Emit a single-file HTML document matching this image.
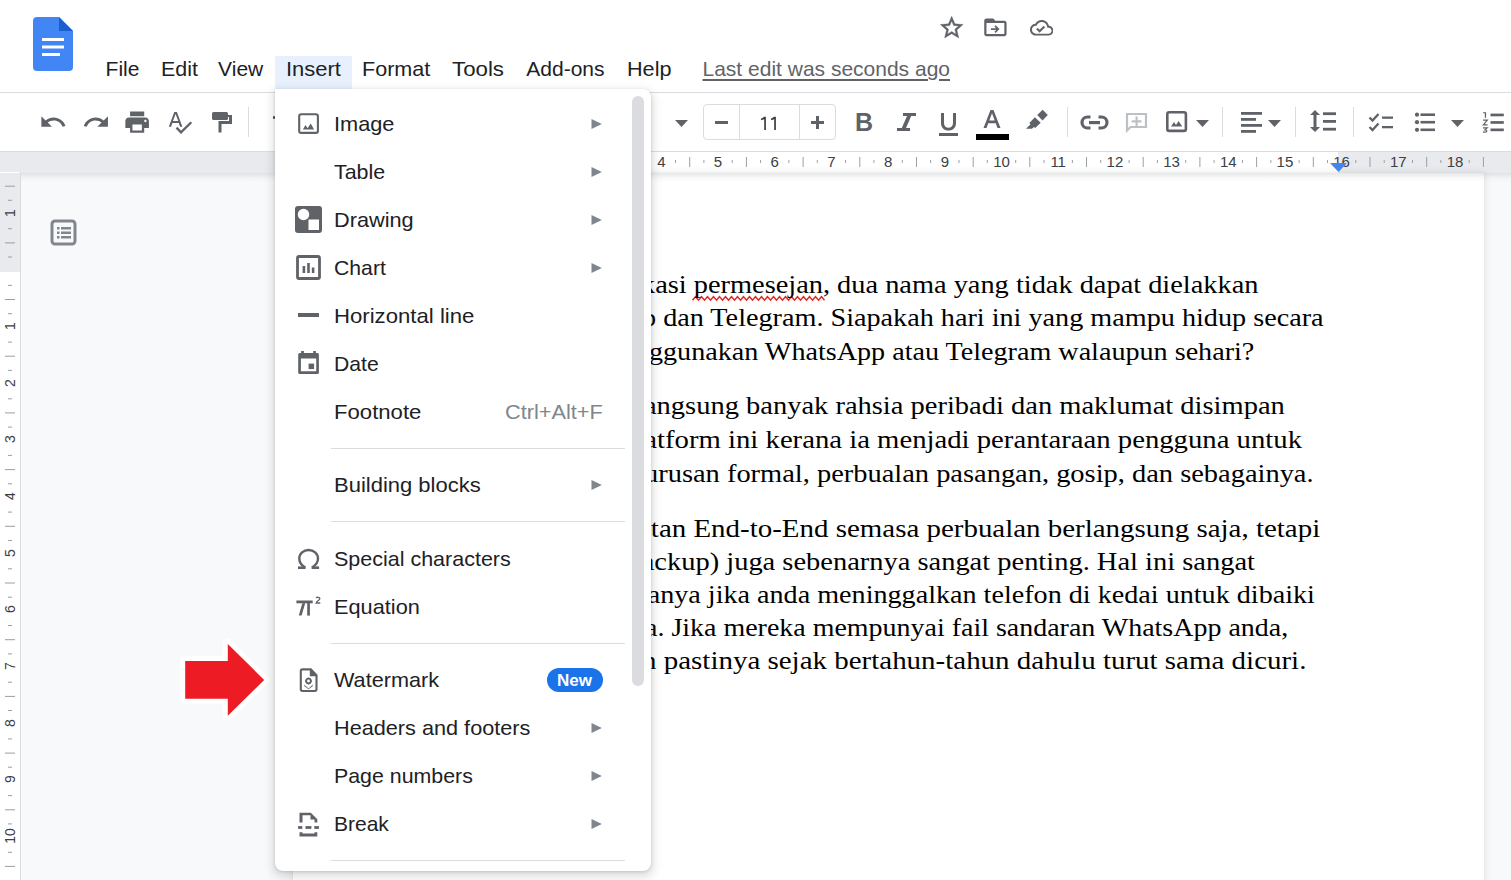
<!DOCTYPE html>
<html><head><meta charset="utf-8">
<style>
*{box-sizing:border-box;margin:0;padding:0}
html,body{width:1511px;height:880px;overflow:hidden;background:#f8f9fa;font-family:"Liberation Sans",sans-serif;color:#202124;position:relative}
</style></head><body>
<div style="position:absolute;left:0;top:0;width:1511px;height:92px;background:#fff"></div>
<div style="position:absolute;left:0;top:92px;width:1511px;height:1px;background:#dadce0"></div>
<div style="position:absolute;left:0;top:93px;width:1511px;height:58px;background:#fff"></div>
<div style="position:absolute;left:0;top:151px;width:1511px;height:1px;background:#dadce0"></div>
<div style="position:absolute;left:0;top:152px;width:1511px;height:21px;background:#e8eaed"></div>
<div style="position:absolute;left:436px;top:152px;width:902px;height:21px;background:#fff"></div>
<div style="position:absolute;left:0;top:173px;width:1511px;height:707px;background:#f8f9fa"></div>
<div style="position:absolute;left:293px;top:173px;width:1191px;height:707px;background:#fff;box-shadow:0 0 1px rgba(60,64,67,.12),0 1px 7px 1px rgba(60,64,67,.12)"></div>
<div style="position:absolute;left:20px;top:173px;width:1491px;height:9px;background:linear-gradient(rgba(60,64,67,.13),rgba(60,64,67,.04) 50%,rgba(60,64,67,0))"></div>
<div style="position:absolute;left:0;top:172px;width:20px;height:708px;background:#fff"></div>
<div style="position:absolute;left:0;top:173px;width:20px;height:99px;background:#e8eaed"></div>
<div style="position:absolute;left:20px;top:172px;width:1px;height:708px;background:#dadce0"></div>
<svg style="position:absolute;left:0;top:152px" width="1511" height="20"><rect x="278.2" y="8" width="1" height="3" fill="#9aa0a6"/><rect x="292.4" y="5" width="1" height="10" fill="#9aa0a6"/><rect x="306.5" y="8" width="1" height="3" fill="#9aa0a6"/><rect x="334.9" y="8" width="1" height="3" fill="#9aa0a6"/><rect x="349.1" y="5" width="1" height="10" fill="#9aa0a6"/><rect x="363.2" y="8" width="1" height="3" fill="#9aa0a6"/><rect x="391.6" y="8" width="1" height="3" fill="#9aa0a6"/><rect x="405.8" y="5" width="1" height="10" fill="#9aa0a6"/><rect x="419.9" y="8" width="1" height="3" fill="#9aa0a6"/><rect x="448.3" y="8" width="1" height="3" fill="#9aa0a6"/><rect x="462.4" y="5" width="1" height="10" fill="#9aa0a6"/><rect x="476.6" y="8" width="1" height="3" fill="#9aa0a6"/><rect x="505.0" y="8" width="1" height="3" fill="#9aa0a6"/><rect x="519.1" y="5" width="1" height="10" fill="#9aa0a6"/><rect x="533.3" y="8" width="1" height="3" fill="#9aa0a6"/><rect x="561.7" y="8" width="1" height="3" fill="#9aa0a6"/><rect x="575.8" y="5" width="1" height="10" fill="#9aa0a6"/><rect x="590.0" y="8" width="1" height="3" fill="#9aa0a6"/><rect x="618.3" y="8" width="1" height="3" fill="#9aa0a6"/><rect x="632.5" y="5" width="1" height="10" fill="#9aa0a6"/><rect x="646.7" y="8" width="1" height="3" fill="#9aa0a6"/><rect x="675.0" y="8" width="1" height="3" fill="#9aa0a6"/><rect x="689.2" y="5" width="1" height="10" fill="#9aa0a6"/><rect x="703.4" y="8" width="1" height="3" fill="#9aa0a6"/><rect x="731.7" y="8" width="1" height="3" fill="#9aa0a6"/><rect x="745.9" y="5" width="1" height="10" fill="#9aa0a6"/><rect x="760.1" y="8" width="1" height="3" fill="#9aa0a6"/><rect x="788.4" y="8" width="1" height="3" fill="#9aa0a6"/><rect x="802.6" y="5" width="1" height="10" fill="#9aa0a6"/><rect x="816.8" y="8" width="1" height="3" fill="#9aa0a6"/><rect x="845.1" y="8" width="1" height="3" fill="#9aa0a6"/><rect x="859.3" y="5" width="1" height="10" fill="#9aa0a6"/><rect x="873.4" y="8" width="1" height="3" fill="#9aa0a6"/><rect x="901.8" y="8" width="1" height="3" fill="#9aa0a6"/><rect x="916.0" y="5" width="1" height="10" fill="#9aa0a6"/><rect x="930.1" y="8" width="1" height="3" fill="#9aa0a6"/><rect x="958.5" y="8" width="1" height="3" fill="#9aa0a6"/><rect x="972.7" y="5" width="1" height="10" fill="#9aa0a6"/><rect x="986.8" y="8" width="1" height="3" fill="#9aa0a6"/><rect x="1015.2" y="8" width="1" height="3" fill="#9aa0a6"/><rect x="1029.3" y="5" width="1" height="10" fill="#9aa0a6"/><rect x="1043.5" y="8" width="1" height="3" fill="#9aa0a6"/><rect x="1071.9" y="8" width="1" height="3" fill="#9aa0a6"/><rect x="1086.0" y="5" width="1" height="10" fill="#9aa0a6"/><rect x="1100.2" y="8" width="1" height="3" fill="#9aa0a6"/><rect x="1128.6" y="8" width="1" height="3" fill="#9aa0a6"/><rect x="1142.7" y="5" width="1" height="10" fill="#9aa0a6"/><rect x="1156.9" y="8" width="1" height="3" fill="#9aa0a6"/><rect x="1185.2" y="8" width="1" height="3" fill="#9aa0a6"/><rect x="1199.4" y="5" width="1" height="10" fill="#9aa0a6"/><rect x="1213.6" y="8" width="1" height="3" fill="#9aa0a6"/><rect x="1241.9" y="8" width="1" height="3" fill="#9aa0a6"/><rect x="1256.1" y="5" width="1" height="10" fill="#9aa0a6"/><rect x="1270.3" y="8" width="1" height="3" fill="#9aa0a6"/><rect x="1298.6" y="8" width="1" height="3" fill="#9aa0a6"/><rect x="1312.8" y="5" width="1" height="10" fill="#9aa0a6"/><rect x="1327.0" y="8" width="1" height="3" fill="#9aa0a6"/><rect x="1355.3" y="8" width="1" height="3" fill="#9aa0a6"/><rect x="1369.5" y="5" width="1" height="10" fill="#9aa0a6"/><rect x="1383.7" y="8" width="1" height="3" fill="#9aa0a6"/><rect x="1412.0" y="8" width="1" height="3" fill="#9aa0a6"/><rect x="1426.2" y="5" width="1" height="10" fill="#9aa0a6"/><rect x="1440.3" y="8" width="1" height="3" fill="#9aa0a6"/><rect x="1468.7" y="8" width="1" height="3" fill="#9aa0a6"/><rect x="1482.9" y="5" width="1" height="10" fill="#9aa0a6"/></svg>
<div style="position:absolute;left:471.3px;top:150.5px;width:40px;text-align:center;font-family:'Liberation Sans',sans-serif;font-size:15px;line-height:21px;color:#3c4043">1</div>
<div style="position:absolute;left:528.0px;top:150.5px;width:40px;text-align:center;font-family:'Liberation Sans',sans-serif;font-size:15px;line-height:21px;color:#3c4043">2</div>
<div style="position:absolute;left:584.7px;top:150.5px;width:40px;text-align:center;font-family:'Liberation Sans',sans-serif;font-size:15px;line-height:21px;color:#3c4043">3</div>
<div style="position:absolute;left:641.4px;top:150.5px;width:40px;text-align:center;font-family:'Liberation Sans',sans-serif;font-size:15px;line-height:21px;color:#3c4043">4</div>
<div style="position:absolute;left:698.0px;top:150.5px;width:40px;text-align:center;font-family:'Liberation Sans',sans-serif;font-size:15px;line-height:21px;color:#3c4043">5</div>
<div style="position:absolute;left:754.7px;top:150.5px;width:40px;text-align:center;font-family:'Liberation Sans',sans-serif;font-size:15px;line-height:21px;color:#3c4043">6</div>
<div style="position:absolute;left:811.4px;top:150.5px;width:40px;text-align:center;font-family:'Liberation Sans',sans-serif;font-size:15px;line-height:21px;color:#3c4043">7</div>
<div style="position:absolute;left:868.1px;top:150.5px;width:40px;text-align:center;font-family:'Liberation Sans',sans-serif;font-size:15px;line-height:21px;color:#3c4043">8</div>
<div style="position:absolute;left:924.8px;top:150.5px;width:40px;text-align:center;font-family:'Liberation Sans',sans-serif;font-size:15px;line-height:21px;color:#3c4043">9</div>
<div style="position:absolute;left:981.5px;top:150.5px;width:40px;text-align:center;font-family:'Liberation Sans',sans-serif;font-size:15px;line-height:21px;color:#3c4043">10</div>
<div style="position:absolute;left:1038.2px;top:150.5px;width:40px;text-align:center;font-family:'Liberation Sans',sans-serif;font-size:15px;line-height:21px;color:#3c4043">11</div>
<div style="position:absolute;left:1094.9px;top:150.5px;width:40px;text-align:center;font-family:'Liberation Sans',sans-serif;font-size:15px;line-height:21px;color:#3c4043">12</div>
<div style="position:absolute;left:1151.6px;top:150.5px;width:40px;text-align:center;font-family:'Liberation Sans',sans-serif;font-size:15px;line-height:21px;color:#3c4043">13</div>
<div style="position:absolute;left:1208.3px;top:150.5px;width:40px;text-align:center;font-family:'Liberation Sans',sans-serif;font-size:15px;line-height:21px;color:#3c4043">14</div>
<div style="position:absolute;left:1264.9px;top:150.5px;width:40px;text-align:center;font-family:'Liberation Sans',sans-serif;font-size:15px;line-height:21px;color:#3c4043">15</div>
<div style="position:absolute;left:1321.6px;top:150.5px;width:40px;text-align:center;font-family:'Liberation Sans',sans-serif;font-size:15px;line-height:21px;color:#3c4043">16</div>
<div style="position:absolute;left:1378.3px;top:150.5px;width:40px;text-align:center;font-family:'Liberation Sans',sans-serif;font-size:15px;line-height:21px;color:#3c4043">17</div>
<div style="position:absolute;left:1435.0px;top:150.5px;width:40px;text-align:center;font-family:'Liberation Sans',sans-serif;font-size:15px;line-height:21px;color:#3c4043">18</div>
<svg style="position:absolute;left:1330px;top:163px" width="17" height="10"><path d="M0 0H17L8.5 9Z" fill="#4285f4"/></svg>
<svg style="position:absolute;left:0;top:172px" width="20" height="708"><rect x="5" y="13.7" width="10" height="1" fill="#9aa0a6"/><rect x="8" y="27.8" width="4" height="1" fill="#9aa0a6"/><rect x="8" y="56.2" width="4" height="1" fill="#9aa0a6"/><rect x="5" y="70.4" width="10" height="1" fill="#9aa0a6"/><rect x="8" y="84.5" width="4" height="1" fill="#9aa0a6"/><rect x="8" y="112.9" width="4" height="1" fill="#9aa0a6"/><rect x="5" y="127.0" width="10" height="1" fill="#9aa0a6"/><rect x="8" y="141.2" width="4" height="1" fill="#9aa0a6"/><rect x="8" y="169.6" width="4" height="1" fill="#9aa0a6"/><rect x="5" y="183.7" width="10" height="1" fill="#9aa0a6"/><rect x="8" y="197.9" width="4" height="1" fill="#9aa0a6"/><rect x="8" y="226.3" width="4" height="1" fill="#9aa0a6"/><rect x="5" y="240.4" width="10" height="1" fill="#9aa0a6"/><rect x="8" y="254.6" width="4" height="1" fill="#9aa0a6"/><rect x="8" y="282.9" width="4" height="1" fill="#9aa0a6"/><rect x="5" y="297.1" width="10" height="1" fill="#9aa0a6"/><rect x="8" y="311.3" width="4" height="1" fill="#9aa0a6"/><rect x="8" y="339.6" width="4" height="1" fill="#9aa0a6"/><rect x="5" y="353.8" width="10" height="1" fill="#9aa0a6"/><rect x="8" y="368.0" width="4" height="1" fill="#9aa0a6"/><rect x="8" y="396.3" width="4" height="1" fill="#9aa0a6"/><rect x="5" y="410.5" width="10" height="1" fill="#9aa0a6"/><rect x="8" y="424.7" width="4" height="1" fill="#9aa0a6"/><rect x="8" y="453.0" width="4" height="1" fill="#9aa0a6"/><rect x="5" y="467.2" width="10" height="1" fill="#9aa0a6"/><rect x="8" y="481.4" width="4" height="1" fill="#9aa0a6"/><rect x="8" y="509.7" width="4" height="1" fill="#9aa0a6"/><rect x="5" y="523.9" width="10" height="1" fill="#9aa0a6"/><rect x="8" y="538.0" width="4" height="1" fill="#9aa0a6"/><rect x="8" y="566.4" width="4" height="1" fill="#9aa0a6"/><rect x="5" y="580.6" width="10" height="1" fill="#9aa0a6"/><rect x="8" y="594.7" width="4" height="1" fill="#9aa0a6"/><rect x="8" y="623.1" width="4" height="1" fill="#9aa0a6"/><rect x="5" y="637.3" width="10" height="1" fill="#9aa0a6"/><rect x="8" y="651.4" width="4" height="1" fill="#9aa0a6"/><rect x="8" y="679.8" width="4" height="1" fill="#9aa0a6"/><rect x="5" y="693.9" width="10" height="1" fill="#9aa0a6"/></svg>
<div style="position:absolute;left:-10px;top:315.9px;width:40px;height:20px;text-align:center;font-family:'Liberation Sans',sans-serif;font-size:14px;line-height:20px;color:#3c4043;transform:rotate(-90deg)">1</div>
<div style="position:absolute;left:-10px;top:372.6px;width:40px;height:20px;text-align:center;font-family:'Liberation Sans',sans-serif;font-size:14px;line-height:20px;color:#3c4043;transform:rotate(-90deg)">2</div>
<div style="position:absolute;left:-10px;top:429.3px;width:40px;height:20px;text-align:center;font-family:'Liberation Sans',sans-serif;font-size:14px;line-height:20px;color:#3c4043;transform:rotate(-90deg)">3</div>
<div style="position:absolute;left:-10px;top:486.0px;width:40px;height:20px;text-align:center;font-family:'Liberation Sans',sans-serif;font-size:14px;line-height:20px;color:#3c4043;transform:rotate(-90deg)">4</div>
<div style="position:absolute;left:-10px;top:542.6px;width:40px;height:20px;text-align:center;font-family:'Liberation Sans',sans-serif;font-size:14px;line-height:20px;color:#3c4043;transform:rotate(-90deg)">5</div>
<div style="position:absolute;left:-10px;top:599.3px;width:40px;height:20px;text-align:center;font-family:'Liberation Sans',sans-serif;font-size:14px;line-height:20px;color:#3c4043;transform:rotate(-90deg)">6</div>
<div style="position:absolute;left:-10px;top:656.0px;width:40px;height:20px;text-align:center;font-family:'Liberation Sans',sans-serif;font-size:14px;line-height:20px;color:#3c4043;transform:rotate(-90deg)">7</div>
<div style="position:absolute;left:-10px;top:712.7px;width:40px;height:20px;text-align:center;font-family:'Liberation Sans',sans-serif;font-size:14px;line-height:20px;color:#3c4043;transform:rotate(-90deg)">8</div>
<div style="position:absolute;left:-10px;top:769.4px;width:40px;height:20px;text-align:center;font-family:'Liberation Sans',sans-serif;font-size:14px;line-height:20px;color:#3c4043;transform:rotate(-90deg)">9</div>
<div style="position:absolute;left:-10px;top:826.1px;width:40px;height:20px;text-align:center;font-family:'Liberation Sans',sans-serif;font-size:14px;line-height:20px;color:#3c4043;transform:rotate(-90deg)">10</div>
<div style="position:absolute;left:-10px;top:202.5px;width:40px;height:20px;text-align:center;font-family:'Liberation Sans',sans-serif;font-size:14px;line-height:20px;color:#3c4043;transform:rotate(-90deg)">1</div>
<svg style="position:absolute;left:50px;top:219px" width="28" height="28" viewBox="0 0 28 28"><rect x="2" y="2" width="23" height="23" rx="3" fill="none" stroke="#80868b" stroke-width="3"/><rect x="7" y="8" width="2.5" height="2.5" fill="#80868b"/><rect x="11" y="8" width="10" height="2.5" fill="#80868b"/><rect x="7" y="12.5" width="2.5" height="2.5" fill="#80868b"/><rect x="11" y="12.5" width="10" height="2.5" fill="#80868b"/><rect x="7" y="17" width="2.5" height="2.5" fill="#80868b"/><rect x="11" y="17" width="10" height="2.5" fill="#80868b"/></svg>
<svg style="position:absolute;left:680px;top:285px" width="160" height="25" viewBox="680 285 160 25"><polyline fill="none" stroke="#e8201c" stroke-width="1.5" points="692.5 300.2 695.5 296.6 698.5 300.2 701.5 296.6 704.5 300.2 707.5 296.6 710.5 300.2 713.5 296.6 716.5 300.2 719.5 296.6 722.5 300.2 725.5 296.6 728.5 300.2 731.5 296.6 734.5 300.2 737.5 296.6 740.5 300.2 743.5 296.6 746.5 300.2 749.5 296.6 752.5 300.2 755.5 296.6 758.5 300.2 761.5 296.6 764.5 300.2 767.5 296.6 770.5 300.2 773.5 296.6 776.5 300.2 779.5 296.6 782.5 300.2 785.5 296.6 788.5 300.2 791.5 296.6 794.5 300.2 797.5 296.6 800.5 300.2 803.5 296.6 806.5 300.2 809.5 296.6 812.5 300.2 815.5 296.6 818.5 300.2 821.5 296.6 824.5 300.2"/></svg>
<div style="position:absolute;left:641.20px;top:269.16px;font-family:'Liberation Serif',serif;font-size:25px;line-height:31px;color:#000;font-weight:normal;white-space:nowrap;transform:scaleX(1.1345);transform-origin:0 0;">kasi permesejan, dua nama yang tidak dapat dielakkan</div>
<div style="position:absolute;left:641.90px;top:302.46px;font-family:'Liberation Serif',serif;font-size:25px;line-height:31px;color:#000;font-weight:normal;white-space:nowrap;transform:scaleX(1.1274);transform-origin:0 0;">p dan Telegram. Siapakah hari ini yang mampu hidup secara</div>
<div style="position:absolute;left:649.00px;top:335.86px;font-family:'Liberation Serif',serif;font-size:25px;line-height:31px;color:#000;font-weight:normal;white-space:nowrap;transform:scaleX(1.1249);transform-origin:0 0;">ggunakan WhatsApp atau Telegram walaupun sehari?</div>
<div style="position:absolute;left:635.50px;top:390.16px;font-family:'Liberation Serif',serif;font-size:25px;line-height:31px;color:#000;font-weight:normal;white-space:nowrap;transform:scaleX(1.1396);transform-origin:0 0;">langsung banyak rahsia peribadi dan maklumat disimpan</div>
<div style="position:absolute;left:622.20px;top:424.06px;font-family:'Liberation Serif',serif;font-size:25px;line-height:31px;color:#000;font-weight:normal;white-space:nowrap;transform:scaleX(1.1484);transform-origin:0 0;">platform ini kerana ia menjadi perantaraan pengguna untuk</div>
<div style="position:absolute;left:643.60px;top:457.66px;font-family:'Liberation Serif',serif;font-size:25px;line-height:31px;color:#000;font-weight:normal;white-space:nowrap;transform:scaleX(1.1374);transform-origin:0 0;">urusan formal, perbualan pasangan, gosip, dan sebagainya.</div>
<div style="position:absolute;left:638.10px;top:513.06px;font-family:'Liberation Serif',serif;font-size:25px;line-height:31px;color:#000;font-weight:normal;white-space:nowrap;transform:scaleX(1.1575);transform-origin:0 0;">atan End-to-End semasa perbualan berlangsung saja, tetapi</div>
<div style="position:absolute;left:618.30px;top:546.06px;font-family:'Liberation Serif',serif;font-size:25px;line-height:31px;color:#000;font-weight:normal;white-space:nowrap;transform:scaleX(1.1383);transform-origin:0 0;">(backup) juga sebenarnya sangat penting. Hal ini sangat</div>
<div style="position:absolute;left:592.60px;top:579.46px;font-family:'Liberation Serif',serif;font-size:25px;line-height:31px;color:#000;font-weight:normal;white-space:nowrap;transform:scaleX(1.1254);transform-origin:0 0;">sekiranya jika anda meninggalkan telefon di kedai untuk dibaiki</div>
<div style="position:absolute;left:644.60px;top:612.46px;font-family:'Liberation Serif',serif;font-size:25px;line-height:31px;color:#000;font-weight:normal;white-space:nowrap;transform:scaleX(1.1185);transform-origin:0 0;">a. Jika mereka mempunyai fail sandaran WhatsApp anda,</div>
<div style="position:absolute;left:642.30px;top:645.46px;font-family:'Liberation Serif',serif;font-size:25px;line-height:31px;color:#000;font-weight:normal;white-space:nowrap;transform:scaleX(1.1586);transform-origin:0 0;">n pastinya sejak bertahun-tahun dahulu turut sama dicuri.</div>
<svg style="position:absolute;left:33px;top:17px" width="40" height="54" viewBox="0 0 40 54"><path d="M4 0H26L40 14V50Q40 54 36 54H4Q0 54 0 50V4Q0 0 4 0Z" fill="#4285f4"/><path d="M26 0L40 14H26Z" fill="#1a5fd0"/><rect x="9" y="21" width="22" height="3" fill="#fff"/><rect x="9" y="28.5" width="22" height="3" fill="#fff"/><rect x="9" y="36" width="18" height="3" fill="#fff"/></svg>
<svg style="position:absolute;left:937.6px;top:13.6px" width="27.4" height="27.4" viewBox="0 0 24 24"><path fill="#5f6368" stroke="#5f6368" stroke-width=".35" d="M22 9.24l-7.19-.62L12 2 9.19 8.63 2 9.24l5.46 4.73L5.82 21 12 17.27 18.18 21l-1.63-7.03L22 9.24zM12 15.4l-3.76 2.27 1-4.28-3.32-2.88 4.38-.38L12 6.1l1.71 4.04 4.38.38-3.32 2.88 1 4.28L12 15.4z"/></svg>
<svg style="position:absolute;left:982.4px;top:13.7px" width="26.8" height="26.8" viewBox="0 0 24 24"><path fill="#5f6368" d="M20 6h-8l-2-2H4c-1.1 0-2 .9-2 2v12c0 1.1.9 2 2 2h16c1.1 0 2-.9 2-2V8c0-1.1-.9-2-2-2zm0 12H4V8h16v10z"/><path fill="#5f6368" d="M12.2 10l-1.1 1.1 1.6 1.6H8v1.6h4.7l-1.6 1.6 1.1 1.1 3.5-3.5z"/></svg>
<svg style="position:absolute;left:1029.8px;top:16px" width="23.5" height="23.5" viewBox="0 0 24 24"><path fill="#5f6368" d="M19.35 10.04C18.67 6.59 15.64 4 12 4 9.11 4 6.6 5.64 5.35 8.04 2.34 8.36 0 10.91 0 14c0 3.31 2.69 6 6 6h13c2.76 0 5-2.24 5-5 0-2.64-2.05-4.78-4.65-4.96zM19 18H6c-2.21 0-4-1.79-4-4 0-2.05 1.53-3.76 3.56-3.97l1.07-.11.5-.95C8.08 7.14 9.94 6 12 6c2.62 0 4.88 1.86 5.39 4.43l.3 1.5 1.53.11c1.56.1 2.78 1.41 2.78 2.96 0 1.65-1.35 3-3 3z"/></svg>
<svg style="position:absolute;left:1030px;top:16px" width="24" height="24" viewBox="1030 16 24 24"><path fill="none" stroke="#5f6368" stroke-width="2.1" d="M1036.9 28.6L1039.6 31.2 1044.4 26.4"/></svg>
<div style="position:absolute;left:275px;top:56px;width:77px;height:33px;background:#e8f0fe"></div>
<div style="position:absolute;left:105.60px;top:56.42px;font-family:'Liberation Sans',sans-serif;font-size:21px;line-height:26px;color:#202124;font-weight:normal;white-space:nowrap;">File</div>
<div style="position:absolute;left:161.00px;top:56.42px;font-family:'Liberation Sans',sans-serif;font-size:21px;line-height:26px;color:#202124;font-weight:normal;white-space:nowrap;transform:scaleX(1.02);transform-origin:0 0;">Edit</div>
<div style="position:absolute;left:218.10px;top:56.42px;font-family:'Liberation Sans',sans-serif;font-size:21px;line-height:26px;color:#202124;font-weight:normal;white-space:nowrap;">View</div>
<div style="position:absolute;left:286.10px;top:56.42px;font-family:'Liberation Sans',sans-serif;font-size:21px;line-height:26px;color:#202124;font-weight:normal;white-space:nowrap;transform:scaleX(1.045);transform-origin:0 0;">Insert</div>
<div style="position:absolute;left:362.40px;top:56.42px;font-family:'Liberation Sans',sans-serif;font-size:21px;line-height:26px;color:#202124;font-weight:normal;white-space:nowrap;transform:scaleX(1.026);transform-origin:0 0;">Format</div>
<div style="position:absolute;left:452.10px;top:56.42px;font-family:'Liberation Sans',sans-serif;font-size:21px;line-height:26px;color:#202124;font-weight:normal;white-space:nowrap;transform:scaleX(1.06);transform-origin:0 0;">Tools</div>
<div style="position:absolute;left:526.30px;top:56.42px;font-family:'Liberation Sans',sans-serif;font-size:21px;line-height:26px;color:#202124;font-weight:normal;white-space:nowrap;">Add-ons</div>
<div style="position:absolute;left:626.70px;top:56.42px;font-family:'Liberation Sans',sans-serif;font-size:21px;line-height:26px;color:#202124;font-weight:normal;white-space:nowrap;transform:scaleX(1.03);transform-origin:0 0;">Help</div>
<div style="position:absolute;left:702.50px;top:56.42px;font-family:'Liberation Sans',sans-serif;font-size:21px;line-height:26px;color:#5f6368;font-weight:normal;white-space:nowrap;text-decoration:underline;text-underline-offset:3px">Last edit was seconds ago</div>
<svg style="position:absolute;left:39px;top:108px" width="28.3" height="28.3" viewBox="0 0 24 24" fill="#5f6368"><path d="M12.5 8c-2.65 0-5.05.99-6.9 2.6L2 7v9h9l-3.62-3.62c1.39-1.16 3.16-1.88 5.12-1.88 3.54 0 6.55 2.31 7.6 5.5l2.37-.78C21.08 11.03 17.15 8 12.5 8z"/></svg>
<svg style="position:absolute;left:82px;top:108px" width="28.3" height="28.3" viewBox="0 0 24 24" fill="#5f6368"><path d="M18.4 10.6C16.55 8.99 14.15 8 11.5 8c-4.65 0-8.58 3.03-9.96 7.22L3.9 16c1.05-3.19 4.05-5.5 7.6-5.5 1.95 0 3.73.72 5.12 1.88L13 16h9V7l-3.6 3.6z"/></svg>
<svg style="position:absolute;left:122.5px;top:108px" width="28.3" height="28.3" viewBox="0 0 24 24" fill="#5f6368"><path d="M19 8H5c-1.66 0-3 1.34-3 3v6h4v4h12v-4h4v-6c0-1.66-1.34-3-3-3zm-3 11H8v-5h8v5zm3-7c-.55 0-1-.45-1-1s.45-1 1-1 1 .45 1 1-.45 1-1 1zm-1-9H6v4h12V3z"/></svg>
<svg style="position:absolute;left:160px;top:100px" width="40" height="40" viewBox="160 100 40 40"><path fill="#5f6368" d="M174.3 111.9H176.9L182.4 126.8H180.1L178.8 123H172.4L171.1 126.8H168.8zM173 121H178.2L175.6 113.9z"/><path fill="none" stroke="#5f6368" stroke-width="2.3" d="M176.5 127.6L181 132.3 191.3 122.2"/></svg>
<svg style="position:absolute;left:211px;top:111px" width="22" height="23" viewBox="0 0 22 23" fill="#5f6368"><rect x="1" y="1" width="16" height="8" rx="1.5"/><path d="M17 4h4v9H10.5v8.5H7.5V10H18V6H17z"/></svg>
<div style="position:absolute;left:248px;top:107px;width:1px;height:30px;background:#dadce0"></div>
<svg style="position:absolute;left:675px;top:120px" width="13" height="7"><path d="M0 0H13L6.5 7Z" fill="#5f6368"/></svg>
<div style="position:absolute;left:703px;top:104px;width:133px;height:36px;border:1px solid #dadce0;border-radius:4px"></div>
<div style="position:absolute;left:739px;top:105px;width:1px;height:34px;background:#dadce0"></div>
<div style="position:absolute;left:799px;top:105px;width:1px;height:34px;background:#dadce0"></div>
<div style="position:absolute;left:715px;top:121px;width:13px;height:3px;background:#5f6368"></div>
<div style="position:absolute;left:811px;top:121px;width:13px;height:3px;background:#5f6368"></div>
<div style="position:absolute;left:816px;top:116px;width:3px;height:13px;background:#5f6368"></div>
<svg style="position:absolute;left:755px;top:112px" width="30" height="22" viewBox="755 112 30 22"><path fill="#3c4043" d="M764.2 116.8H765.9V130H764.2V119.2L761 120.3V118.8z"/><path fill="#3c4043" d="M774.2 116.8H775.9V130H774.2V119.2L771 120.3V118.8z"/></svg>
<div style="position:absolute;left:855.00px;top:107.23px;font-family:'Liberation Sans',sans-serif;font-size:25px;line-height:31px;color:#5f6368;font-weight:bold;white-space:nowrap;">B</div>
<svg style="position:absolute;left:896px;top:112px" width="21" height="20" viewBox="0 0 21 20"><path fill="#5f6368" d="M7 1h13v3h-4.8l-5.2 12H14v3H1v-3h4.8L11 4H7z"/></svg>
<svg style="position:absolute;left:938px;top:112px" width="21" height="25" viewBox="0 0 21 25"><path fill="#5f6368" d="M3 1h3v10c0 2.8 1.9 4.8 4.5 4.8S15 13.8 15 11V1h3v10c0 4.6-3.1 7.6-7.5 7.6S3 15.6 3 11z"/><rect x="1" y="21" width="19" height="3" fill="#5f6368"/></svg>
<svg style="position:absolute;left:981px;top:109px" width="22" height="20" viewBox="0 0 22 20"><path fill="#5f6368" d="M9.5 1h3l7 18h-3l-1.8-4.7H7.3L5.5 19h-3zM8.3 11.6h5.4L11 4.3z"/></svg>
<div style="position:absolute;left:976px;top:134px;width:33px;height:6px;background:#000"></div>
<svg style="position:absolute;left:1020px;top:100px" width="35" height="35" viewBox="1020 100 35 35"><path fill="#5f6368" d="M1042.7 109.7L1047.8 114.9 1042.5 120.4 1037.2 114.9z"/><path fill="#5f6368" d="M1034.9 117.3L1040.7 122.7 1035.2 128.1 1034 126.9 1031.9 128.8H1026L1030.5 124.3 1029.3 123z"/></svg>
<div style="position:absolute;left:1067px;top:107px;width:1px;height:30px;background:#dadce0"></div>
<svg style="position:absolute;left:1080px;top:115px" width="29" height="15" viewBox="0 0 29 15"><path fill="none" stroke="#5f6368" stroke-width="3.2" d="M10.5 2H7.5a5.5 5.5 0 0 0 0 11h3M18.5 2h3a5.5 5.5 0 0 1 0 11h-3"/><rect x="9" y="6" width="11" height="3.2" fill="#5f6368"/></svg>
<svg style="position:absolute;left:1125px;top:112px" width="23" height="21" viewBox="0 0 23 21"><path fill="none" stroke="#bdc1c6" stroke-width="2.2" d="M2 2H21V15H5.5L2 18.5z"/><path fill="#bdc1c6" d="M10.5 4.5h2.2v3.8h3.8v2.2h-3.8v3.8h-2.2v-3.8H6.7V8.3h3.8z"/></svg>
<svg style="position:absolute;left:1166px;top:111px" width="22" height="22" viewBox="0 0 22 22"><rect x="1.3" y="1.3" width="18.6" height="18.6" rx="2" fill="none" stroke="#5f6368" stroke-width="2.6"/><path fill="#5f6368" d="M5 15.5L8 11l2 3 2.6-4 3.6 5.5z"/></svg>
<svg style="position:absolute;left:1196px;top:120px" width="13" height="7"><path d="M0 0H13L6.5 7Z" fill="#5f6368"/></svg>
<div style="position:absolute;left:1222px;top:107px;width:1px;height:30px;background:#dadce0"></div>
<svg style="position:absolute;left:1241px;top:112px" width="22" height="21" viewBox="0 0 22 21"><rect x="0" y="0" width="21" height="2.8" fill="#5f6368"/><rect x="0" y="6" width="15" height="2.8" fill="#5f6368"/><rect x="0" y="12" width="21" height="2.8" fill="#5f6368"/><rect x="0" y="18" width="15" height="2.8" fill="#5f6368"/></svg>
<svg style="position:absolute;left:1268px;top:120px" width="13" height="7"><path d="M0 0H13L6.5 7Z" fill="#5f6368"/></svg>
<div style="position:absolute;left:1294.5px;top:107px;width:1px;height:30px;background:#dadce0"></div>
<svg style="position:absolute;left:1309px;top:110px" width="28" height="23" viewBox="0 0 28 23"><path fill="#5f6368" d="M6 0L11 5H7.5V17H11L6 22L1 17H4.5V5H1z"/><rect x="14" y="2.3" width="13" height="2.8" fill="#5f6368"/><rect x="14" y="10" width="13" height="2.8" fill="#5f6368"/><rect x="14" y="17.8" width="13" height="2.8" fill="#5f6368"/></svg>
<div style="position:absolute;left:1352.5px;top:107px;width:1px;height:30px;background:#dadce0"></div>
<svg style="position:absolute;left:1368px;top:112px" width="26" height="20" viewBox="0 0 26 20"><path fill="none" stroke="#5f6368" stroke-width="2.3" d="M1.5 5.5l3 3 6-6.5M1.5 15l3 3 6-6.5"/><rect x="14" y="4.5" width="11" height="2.3" fill="#5f6368"/><rect x="14" y="14" width="11" height="2.3" fill="#5f6368"/></svg>
<svg style="position:absolute;left:1414px;top:112px" width="22" height="20" viewBox="0 0 22 20"><circle cx="3" cy="2.7" r="2.1" fill="#5f6368"/><circle cx="3" cy="10.2" r="2.1" fill="#5f6368"/><circle cx="3" cy="17.8" r="2.1" fill="#5f6368"/><rect x="6.5" y="1.4" width="14.5" height="2.6" fill="#5f6368"/><rect x="6.5" y="8.9" width="14.5" height="2.6" fill="#5f6368"/><rect x="6.5" y="16.5" width="14.5" height="2.6" fill="#5f6368"/></svg>
<svg style="position:absolute;left:1451px;top:120px" width="13" height="7"><path d="M0 0H13L6.5 7Z" fill="#5f6368"/></svg>
<svg style="position:absolute;left:1476px;top:105px" width="35" height="35" viewBox="1476 105 35 35"><path fill="#5f6368" d="M1483 112.2H1486.1V117.8H1484.8V113.3H1483z"/><path fill="none" stroke="#5f6368" stroke-width="1.2" d="M1483 120.1H1487.3L1483.3 124.9H1487.6M1483 127.9H1487.2L1485 129.9C1487.5 129.9 1487.5 132.1 1485 132.1H1483"/><rect x="1490.5" y="113.6" width="13.3" height="2.7" fill="#5f6368"/><rect x="1490.5" y="121.1" width="13.3" height="2.7" fill="#5f6368"/><rect x="1490.5" y="128.5" width="13.3" height="2.7" fill="#5f6368"/></svg>
<div style="position:absolute;left:272.6px;top:116px;width:2.5px;height:3px;background:#3c4043;border-radius:1px"></div>
<svg style="position:absolute;left:166px;top:626px" width="110" height="108" viewBox="-10 -10 110 108"><path d="M9.2 24.9H51.8V7.9L88.2 44 51.8 79.8V62.8H9.2z" fill="#ed1c24" stroke="#fff" stroke-width="10" stroke-linejoin="round" paint-order="stroke"/></svg>
<div style="position:absolute;left:275px;top:89px;width:376px;height:782px;background:#fff;border-radius:0 8px 8px 8px;box-shadow:0 4px 8px 3px rgba(60,64,67,.15),0 1px 3px rgba(60,64,67,.2)"></div>
<div style="position:absolute;left:632px;top:96px;width:12px;height:590px;background:#dadce0;border-radius:6px"></div>
<div style="position:absolute;left:334.00px;top:111.22px;font-family:'Liberation Sans',sans-serif;font-size:21px;line-height:26px;color:#202124;font-weight:normal;white-space:nowrap;transform:scaleX(1.036);transform-origin:0 0;">Image</div>
<svg style="position:absolute;left:591px;top:119.2px" width="11" height="10"><path d="M0.5 0L10.8 5 0.5 10z" fill="#80868b"/></svg>
<div style="position:absolute;left:334.00px;top:158.92px;font-family:'Liberation Sans',sans-serif;font-size:21px;line-height:26px;color:#202124;font-weight:normal;white-space:nowrap;transform:scaleX(1.02);transform-origin:0 0;">Table</div>
<svg style="position:absolute;left:591px;top:166.9px" width="11" height="10"><path d="M0.5 0L10.8 5 0.5 10z" fill="#80868b"/></svg>
<div style="position:absolute;left:334.00px;top:207.22px;font-family:'Liberation Sans',sans-serif;font-size:21px;line-height:26px;color:#202124;font-weight:normal;white-space:nowrap;transform:scaleX(1.034);transform-origin:0 0;">Drawing</div>
<svg style="position:absolute;left:591px;top:215.2px" width="11" height="10"><path d="M0.5 0L10.8 5 0.5 10z" fill="#80868b"/></svg>
<div style="position:absolute;left:334.00px;top:254.82px;font-family:'Liberation Sans',sans-serif;font-size:21px;line-height:26px;color:#202124;font-weight:normal;white-space:nowrap;transform:scaleX(1.01);transform-origin:0 0;">Chart</div>
<svg style="position:absolute;left:591px;top:262.8px" width="11" height="10"><path d="M0.5 0L10.8 5 0.5 10z" fill="#80868b"/></svg>
<div style="position:absolute;left:334.00px;top:303.02px;font-family:'Liberation Sans',sans-serif;font-size:21px;line-height:26px;color:#202124;font-weight:normal;white-space:nowrap;transform:scaleX(1.055);transform-origin:0 0;">Horizontal line</div>
<div style="position:absolute;left:334.00px;top:350.82px;font-family:'Liberation Sans',sans-serif;font-size:21px;line-height:26px;color:#202124;font-weight:normal;white-space:nowrap;transform:scaleX(1.007);transform-origin:0 0;">Date</div>
<div style="position:absolute;left:334.00px;top:398.82px;font-family:'Liberation Sans',sans-serif;font-size:21px;line-height:26px;color:#202124;font-weight:normal;white-space:nowrap;transform:scaleX(1.054);transform-origin:0 0;">Footnote</div>
<div style="position:absolute;left:334.00px;top:471.92px;font-family:'Liberation Sans',sans-serif;font-size:21px;line-height:26px;color:#202124;font-weight:normal;white-space:nowrap;transform:scaleX(1.047);transform-origin:0 0;">Building blocks</div>
<svg style="position:absolute;left:591px;top:479.9px" width="11" height="10"><path d="M0.5 0L10.8 5 0.5 10z" fill="#80868b"/></svg>
<div style="position:absolute;left:334.00px;top:545.82px;font-family:'Liberation Sans',sans-serif;font-size:21px;line-height:26px;color:#202124;font-weight:normal;white-space:nowrap;transform:scaleX(1.023);transform-origin:0 0;">Special characters</div>
<div style="position:absolute;left:334.00px;top:594.12px;font-family:'Liberation Sans',sans-serif;font-size:21px;line-height:26px;color:#202124;font-weight:normal;white-space:nowrap;transform:scaleX(1.035);transform-origin:0 0;">Equation</div>
<div style="position:absolute;left:334.00px;top:666.82px;font-family:'Liberation Sans',sans-serif;font-size:21px;line-height:26px;color:#202124;font-weight:normal;white-space:nowrap;transform:scaleX(1.03);transform-origin:0 0;">Watermark</div>
<div style="position:absolute;left:334.00px;top:714.92px;font-family:'Liberation Sans',sans-serif;font-size:21px;line-height:26px;color:#202124;font-weight:normal;white-space:nowrap;transform:scaleX(1.032);transform-origin:0 0;">Headers and footers</div>
<svg style="position:absolute;left:591px;top:722.9px" width="11" height="10"><path d="M0.5 0L10.8 5 0.5 10z" fill="#80868b"/></svg>
<div style="position:absolute;left:334.00px;top:762.82px;font-family:'Liberation Sans',sans-serif;font-size:21px;line-height:26px;color:#202124;font-weight:normal;white-space:nowrap;transform:scaleX(1.017);transform-origin:0 0;">Page numbers</div>
<svg style="position:absolute;left:591px;top:770.8px" width="11" height="10"><path d="M0.5 0L10.8 5 0.5 10z" fill="#80868b"/></svg>
<div style="position:absolute;left:334.00px;top:810.52px;font-family:'Liberation Sans',sans-serif;font-size:21px;line-height:26px;color:#202124;font-weight:normal;white-space:nowrap;">Break</div>
<svg style="position:absolute;left:591px;top:818.5px" width="11" height="10"><path d="M0.5 0L10.8 5 0.5 10z" fill="#80868b"/></svg>
<div style="position:absolute;left:504.50px;top:398.82px;font-family:'Liberation Sans',sans-serif;font-size:21px;line-height:26px;color:#80868b;font-weight:normal;white-space:nowrap;transform:scaleX(1.035);transform-origin:0 0;">Ctrl+Alt+F</div>
<div style="position:absolute;left:331px;top:448.0px;width:294px;height:1px;background:#dadce0"></div>
<div style="position:absolute;left:331px;top:520.7px;width:294px;height:1px;background:#dadce0"></div>
<div style="position:absolute;left:331px;top:642.9px;width:294px;height:1px;background:#dadce0"></div>
<div style="position:absolute;left:331px;top:859.9px;width:294px;height:1px;background:#dadce0"></div>
<div style="position:absolute;left:547px;top:668px;width:56px;height:24px;border-radius:12px;background:#1a73e8"></div>
<div style="position:absolute;left:557.00px;top:669.71px;font-family:'Liberation Sans',sans-serif;font-size:17px;line-height:21px;color:#fff;font-weight:bold;white-space:nowrap;">New</div>
<svg style="position:absolute;left:290px;top:105px" width="40" height="40" viewBox="290 105 40 40"><rect x="299.2" y="114.2" width="18.7" height="18.7" rx="2" fill="none" stroke="#5f6368" stroke-width="2.1"/><path fill="#5f6368" d="M302.9 129.4L305.5 124.9 307.6 128.3 310.7 123.4 314.1 129.4z"/></svg>
<svg style="position:absolute;left:295px;top:206px" width="27" height="27" viewBox="0 0 27 27"><rect x="0" y="0" width="27" height="27" rx="3" fill="#5f6368"/><circle cx="8.5" cy="8.5" r="5.7" fill="#fff"/><rect x="13.5" y="13.5" width="10.5" height="10.5" fill="#fff"/></svg>
<svg style="position:absolute;left:296px;top:255px" width="25" height="25" viewBox="0 0 25 25"><rect x="1.5" y="1.5" width="22" height="22" rx="1.5" fill="none" stroke="#5f6368" stroke-width="2.8"/><rect x="6.6" y="11" width="2.6" height="7" fill="#5f6368"/><rect x="11.2" y="8" width="2.6" height="10" fill="#5f6368"/><rect x="15.8" y="12.5" width="2.6" height="5.5" fill="#5f6368"/></svg>
<div style="position:absolute;left:298px;top:313px;width:21px;height:4px;background:#5f6368"></div>
<svg style="position:absolute;left:290px;top:345px" width="40" height="40" viewBox="290 345 40 40"><path fill="#5f6368" d="M301.1 351.1H303.9V353H313.2V351.1H315.9V353H317.4Q318.9 353 318.9 354.5V372.4Q318.9 373.9 317.4 373.9H299.7Q298.2 373.9 298.2 372.4V354.5Q298.2 353 299.7 353H301.1zM300.9 358.6V371.2H316.2V358.6z"/><rect x="308.6" y="363.6" width="5.5" height="5.5" fill="#5f6368"/></svg>
<svg style="position:absolute;left:290px;top:540px" width="40" height="80" viewBox="290 540 40 80"><path fill="none" stroke="#5f6368" stroke-width="2.4" d="M305.2 567.5C301.2 565.3 299.3 562 299.3 558.6 299.3 553.5 303.6 550 308.6 550S318 553.5 318 558.6C318 562 316 565.3 312 567.5"/><rect x="298" y="566.4" width="7.6" height="2.6" fill="#5f6368"/><rect x="311.6" y="566.4" width="7.5" height="2.6" fill="#5f6368"/><rect x="296.4" y="600.5" width="16.3" height="2.8" fill="#5f6368"/><path fill="#5f6368" d="M302.3 603.2H305.2L301.6 615.6H298.8z"/><rect x="307.2" y="603" width="2.7" height="12.6" fill="#5f6368"/><path fill="none" stroke="#5f6368" stroke-width="1.3" d="M316.3 598.2C316.6 596.9 319.9 596.9 319.9 598.6 319.9 600 316.3 601.6 316.1 603H320.3"/></svg>
<svg style="position:absolute;left:290px;top:660px" width="40" height="40" viewBox="290 660 40 40"><path fill="none" stroke="#5f6368" stroke-width="2.1" d="M302 669.4H310.8L316.5 675.2V689.3Q316.5 691 314.8 691H302.5Q300.8 691 300.8 689.3V671Q300.8 669.4 302.5 669.4z"/><path fill="#5f6368" d="M309.8 668.6L317.5 676.3H309.8z"/><circle cx="308.5" cy="681" r="2.3" fill="none" stroke="#5f6368" stroke-width="1.8"/><path fill="#5f6368" d="M307.8 677.6h1.4v1h-1.4zM307.8 683.4h1.4v1h-1.4zM305.2 680.3h1v1.4h-1zM310.8 680.3h1v1.4h-1z"/><path fill="#5f6368" d="M304 684.5L308.5 688.6 313 684.5 312.6 686.2 308.5 689.3 304.5 686.2z"/></svg>
<svg style="position:absolute;left:290px;top:805px" width="40" height="40" viewBox="290 805 40 40"><path fill="#5f6368" d="M299.5 812.7H310.8L317.3 819.3V822.5H314.5V819.5H310.5V815.3H302.5V822.5H299.5z"/><rect x="298.1" y="826.1" width="4.2" height="2.8" fill="#5f6368"/><rect x="305.5" y="826.1" width="5.9" height="2.8" fill="#5f6368"/><rect x="314.3" y="826.1" width="4.6" height="2.8" fill="#5f6368"/><path fill="#5f6368" d="M299.5 832.3H302.5V833.6H314.5V832.3H317.3V836.4H299.5z"/></svg>
</body></html>
